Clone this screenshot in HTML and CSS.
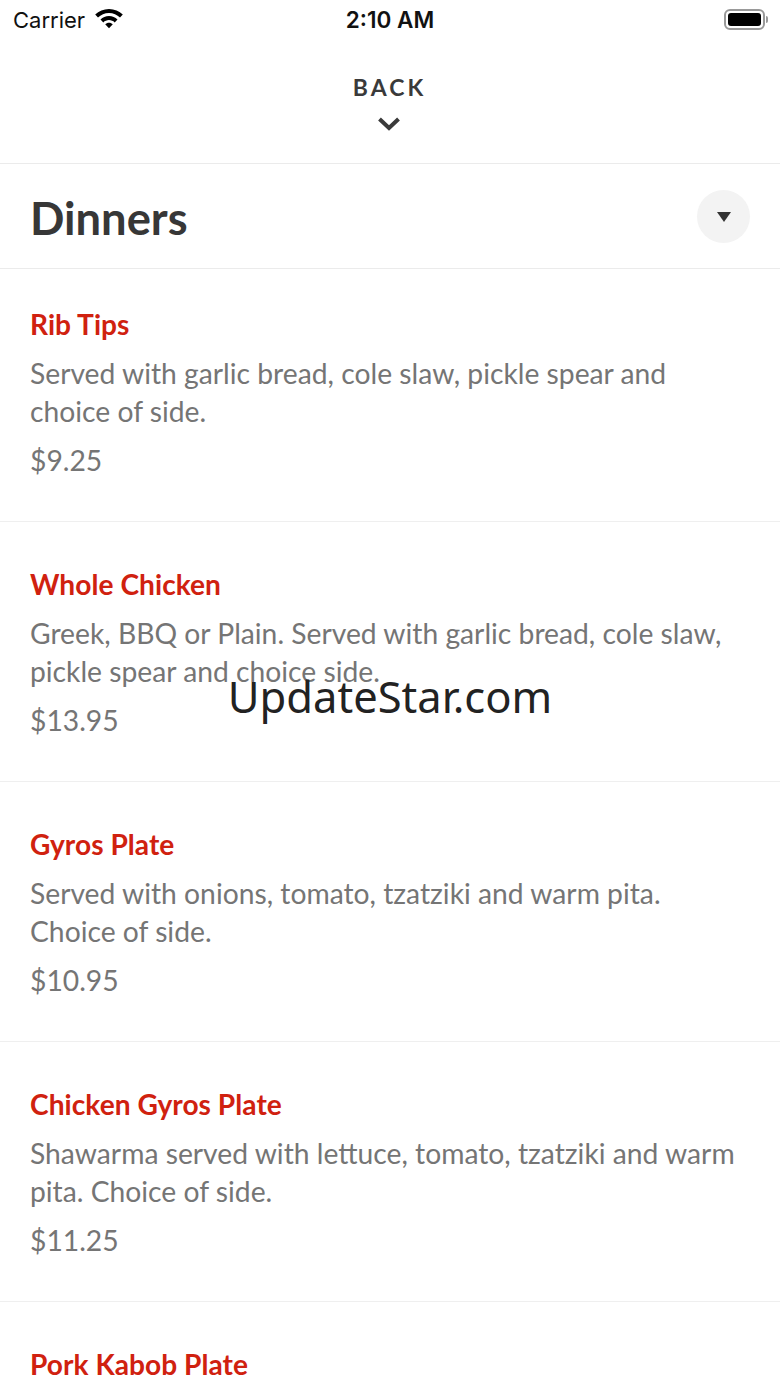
FILE: index.html
```html
<!DOCTYPE html>
<html lang="en">
<head>
  <meta charset="UTF-8">
  <meta name="viewport" content="width=device-width, initial-scale=1.0">
  <title>Dinners</title>
  <link rel="stylesheet" href="styles.css">
</head>
<body>
  <div class="status-bar">
    <div class="status-left">
      <span>Carrier</span>
      <svg class="wifi" width="30" height="22" viewBox="0 0 30 22">
        <path d="M15 1C9.600 1 4.800 3.100 1.200 6.600l2.800 3C6.900 6.800 10.700 5 15 5s8.100 1.800 11 4.600l2.800-3C25.200 3.100 20.400 1 15 1z"/>
        <path d="M15 8c-3.300 0-6.300 1.300-8.500 3.400l2.800 3C10.800 13 12.800 12.100 15 12.100s4.200.9 5.700 2.300l2.800-3C21.300 9.300 18.300 8 15 8z"/>
        <path d="M15 14.800c-1.500 0-2.800.6-3.800 1.500L15 20.300l3.800-4c-1-.9-2.300-1.500-3.800-1.500z"/>
      </svg>
    </div>
    <div class="status-time">2:10 AM</div>
    <div class="status-right">
      <div class="battery"><div class="battery-fill"></div></div>
      <div class="battery-tip"></div>
    </div>
  </div>

  <div class="back-bar">
    <div class="back-label">BACK</div>
    <svg class="back-chevron" width="24" height="16" viewBox="0 0 24 16">
      <path d="M2.500 3l9.500 9 9.500-9" fill="none" stroke="#3a3a3a" stroke-width="4"/>
    </svg>
  </div>

  <div class="section-head">
    <h1>Dinners</h1>
    <div class="toggle"><div class="toggle-arrow"></div></div>
  </div>

  <div class="menu">
    <div class="item first">
      <div class="item-name">Rib Tips</div>
      <div class="item-desc">Served with garlic bread, cole slaw, pickle spear and<br>choice of side.</div>
      <div class="item-price">$9.25</div>
    </div>
    <div class="item">
      <div class="item-name">Whole Chicken</div>
      <div class="item-desc">Greek, BBQ or Plain. Served with garlic bread, cole slaw,<br>pickle spear and choice side.</div>
      <div class="item-price">$13.95</div>
    </div>
    <div class="item">
      <div class="item-name">Gyros Plate</div>
      <div class="item-desc">Served with onions, tomato, tzatziki and warm pita.<br>Choice of side.</div>
      <div class="item-price">$10.95</div>
    </div>
    <div class="item">
      <div class="item-name">Chicken Gyros Plate</div>
      <div class="item-desc">Shawarma served with lettuce, tomato, tzatziki and warm<br>pita. Choice of side.</div>
      <div class="item-price">$11.25</div>
    </div>
    <div class="item last">
      <div class="item-name">Pork Kabob Plate</div>
    </div>
  </div>

  <div class="watermark">UpdateStar.com</div>
</body>
</html>
```

FILE: styles.css
```css
body {
  margin: 0; padding: 0;
  position: relative;
  background: #fff;
  font-family: "Lato", sans-serif;
}

.status-bar {
  height: 40px; padding: 0 12px 0 13px;
  display: flex; align-items: center; justify-content: space-between;
  position: relative;
  font-family: "Inter", sans-serif; color: #111;
}
.status-left { display: flex; align-items: center; gap: 9px; font-size: 22px; }
.wifi { margin-top: -2px; }
.status-time {
  position: absolute; left: 0; right: 0; top: 6px; text-align: center;
  font-size: 22.500px; font-weight: 600;
}
.status-right { display: flex; align-items: center; gap: 1px; margin-top: -2px; }
.battery {
  width: 41px; height: 21px; box-sizing: border-box; padding: 2px;
  border: 2px solid #999; border-radius: 6px;
}
.battery-fill { height: 100%; background: #000; border-radius: 3px; }
.battery-tip { width: 2px; height: 7px; background: #999; border-radius: 0 2px 2px 0; }

.back-bar {
  height: 124px; box-sizing: border-box; padding: 33px 2px 0 0;
  display: flex; flex-direction: column; align-items: center;
  border-bottom: 1px solid #ebebeb;
}
.back-label {
  margin-left: 1px;
  font-size: 23px; font-weight: 700; letter-spacing: 3px; line-height: 28px;
  color: #3a3a3a;
}
.back-chevron { margin-top: 15px; }

.section-head {
  height: 105px; box-sizing: border-box; padding: 0 30px;
  display: flex; align-items: center; justify-content: space-between;
  border-bottom: 1px solid #ebebeb;
}
h1 { margin: 2px 0 0; font-size: 45.300px; font-weight: 700; color: #373737; }
.toggle {
  width: 53px; height: 53px; border-radius: 50%;
  background: #f3f3f3;
  display: flex; align-items: center; justify-content: center;
}
.toggle-arrow {
  width: 0; height: 0; margin-top: 2px;
  border-left: 7px solid transparent; border-right: 7px solid transparent;
  border-top: 10px solid #333;
}

.item {
  height: 260px; box-sizing: border-box; padding: 45px 30px 0;
  border-bottom: 1px solid #efefef;
}
.item.first { height: 253px; padding-top: 38px; }
.item.last { height: 85px; border-bottom: 0; }
.item-name { font-size: 28.100px; font-weight: 700; line-height: 34px; letter-spacing: 0.05px; color: #d0210f; }
.item-desc { margin-top: 13px; font-size: 28.250px; line-height: 38px; color: #757575; }
.item-price { margin-top: 11px; font-size: 28.250px; line-height: 38px; color: #757575; }

.watermark {
  position: absolute; left: 0; right: 0; top: 668px;
  text-align: center;
  font-family: "Noto Sans", sans-serif; font-size: 43.500px; line-height: 56px;
  color: #222;
}
```
